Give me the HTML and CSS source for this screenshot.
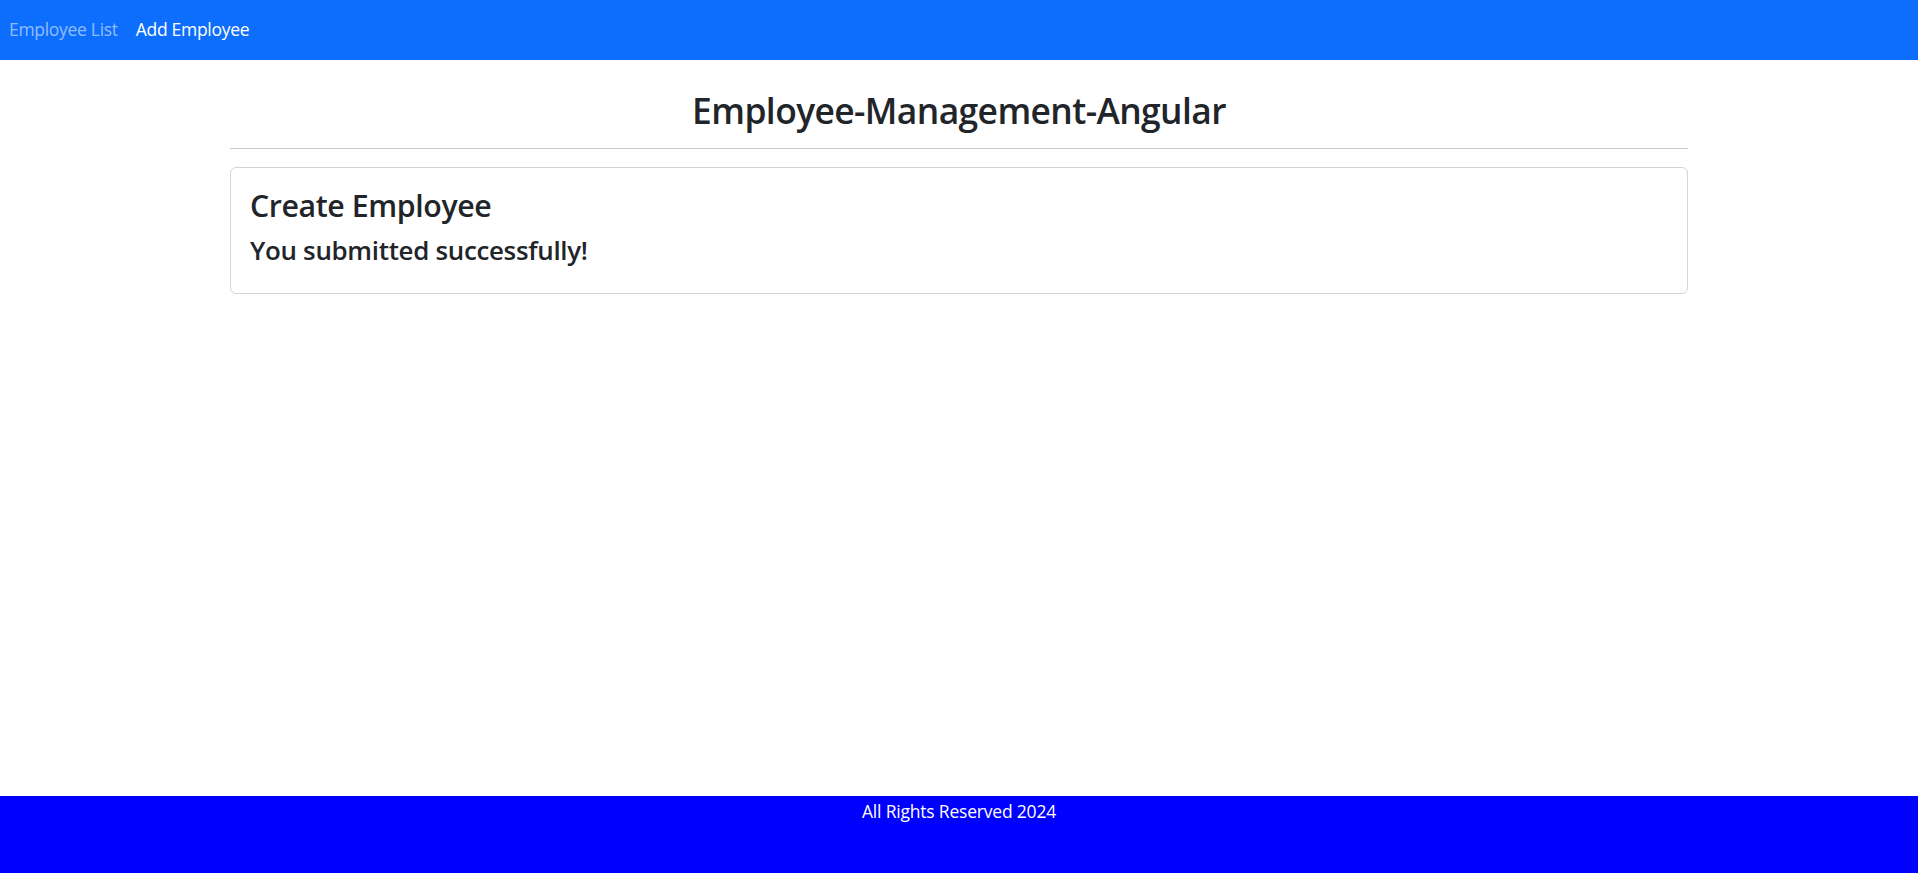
FILE: index.html
```html
<!DOCTYPE html>
<html lang="en">
<head>
<meta charset="utf-8">
<title>Employee-Management-Angular</title>
<link rel="stylesheet" href="styles.css">
</head>
<body>
<div class="page">
  <nav class="navbar">
    <a class="nav-link" href="#">Employee List</a>
    <a class="nav-link active" href="#">Add Employee</a>
  </nav>
  <main class="main">
    <div class="container">
      <h1 class="title">Employee-Management-Angular</h1>
      <hr class="divider">
      <div class="card">
        <h3 class="card-title">Create Employee</h3>
        <h4 class="card-msg">You submitted successfully!</h4>
      </div>
    </div>
  </main>
  <footer class="footer">All Rights Reserved 2024</footer>
</div>
</body>
</html>
```

FILE: styles.css
```css
* { box-sizing: border-box; }
html, body { margin: 0; padding: 0; }
body {
  font-family: "Open Sans", "Noto Sans", "Liberation Sans", sans-serif;
  font-size: 16px;
  line-height: 1.5;
  color: #212529;
  background: #fff;
}
.page {
  min-height: 100vh;
  display: flex;
  flex-direction: column;
}
.navbar {
  height: 60px;
  background: #0d6efd;
  display: flex;
  align-items: center;
  gap: 18px;
  padding: 0 9px 2px;
}
.nav-link {
  color: rgba(255,255,255,0.55);
  text-decoration: none;
  font-size: 17.5px;
  letter-spacing: -0.3px;
}
.nav-link.active { color: #fff; }
.main { flex: 1; }
.container {
  width: 1458px;
  margin: 0 auto;
  padding-top: 26px;
}
.title {
  margin: 0 0 14px;
  font-size: 35.4px;
  font-weight: 600;
  line-height: 48px;
  text-align: center;
  letter-spacing: -0.6px;
}
.divider {
  margin: 0 0 18px;
  border: 0;
  border-top: 1px solid #c8c9ca;
}
.card {
  border: 1px solid #d3d4d5;
  border-radius: 6px;
  padding: 20px 19px 20px;
}
.card-title {
  margin: 0 0 11px;
  font-size: 30.3px;
  font-weight: 600;
  line-height: 36px;
  letter-spacing: -0.4px;
}
.card-msg {
  margin: 0 0 8px;
  font-size: 25.9px;
  font-weight: 600;
  line-height: 30px;
  letter-spacing: -0.3px;
}
.footer {
  height: 77px;
  background: #0000ff;
  color: #fff;
  text-align: center;
  padding-top: 2px;
  font-size: 17.5px;
  letter-spacing: -0.2px;
}
```
